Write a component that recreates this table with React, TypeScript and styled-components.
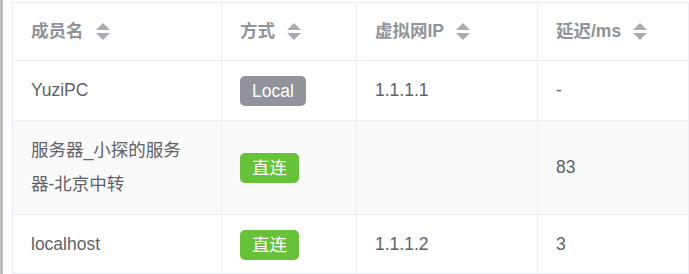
import React from "react";
import styled, { createGlobalStyle } from "styled-components";

const Global = createGlobalStyle`
  html, body { margin: 0; padding: 0; background: #ffffff; }
  body { font-family: "Liberation Sans", "Noto Sans CJK SC", sans-serif; }
`;

const Frame = styled.div`
  box-sizing: border-box;
  width: 689px;
  height: 274px;
  border-left: 3px solid #bdbdbd;
  padding: 2px 0 0 9px;
  overflow: hidden;
`;

const Table = styled.table`
  width: 676px;
  table-layout: fixed;
  border-collapse: collapse;
  border: 1px solid #ebeef5;
  font-size: 17.5px;
  color: #606266;
`;

const Row = styled.tr<{ $striped?: boolean }>`
  background: ${(p) => (p.$striped ? "#fafafa" : "#ffffff")};
`;

const HeadCell = styled.th`
  border: 1px solid #ebeef5;
  padding: 12px 18px;
  text-align: left;
  font-weight: 700;
  color: #909399;
  line-height: 33px;
  white-space: nowrap;
`;

const HeadInner = styled.div`
  display: flex;
  align-items: center;
`;

const Caret = styled.span`
  display: inline-flex;
  flex-direction: column;
  gap: 3px;
  margin-left: 12px;
`;

const Tri = styled.span<{ $dir: "up" | "down" }>`
  width: 0;
  height: 0;
  border-left: 7px solid transparent;
  border-right: 7px solid transparent;
  ${(p) =>
    p.$dir === "up"
      ? "border-bottom: 7px solid #a8abb2;"
      : "border-top: 7px solid #a8abb2;"}
`;

const Cell = styled.td`
  border: 1px solid #ebeef5;
  padding: 12px 26px 12px 18px;
  line-height: 34.5px;
  vertical-align: middle;
`;

const Tag = styled.span<{ $kind: "info" | "success" }>`
  display: inline-flex;
  align-items: center;
  height: 30px;
  padding: 0 12px;
  border-radius: 5px;
  color: #ffffff;
  font-size: 17.5px;
  line-height: 30px;
  vertical-align: middle;
  background: ${(p) => (p.$kind === "info" ? "#909399" : "#67c23a")};
`;

const SortIcon = () => (
  <Caret>
    <Tri $dir="up" />
    <Tri $dir="down" />
  </Caret>
);

const rows = [
  { name: "YuziPC", mode: "Local", kind: "info" as const, ip: "1.1.1.1", ms: "-" },
  { name: "服务器_小探的服务器-北京中转", mode: "直连", kind: "success" as const, ip: "", ms: "83" },
  { name: "localhost", mode: "直连", kind: "success" as const, ip: "1.1.1.2", ms: "3" },
];

const headers = ["成员名", "方式", "虚拟网IP", "延迟/ms"];

export default function App() {
  return (
    <>
      <Global />
      <Frame>
        <Table>
          <colgroup>
            <col style={{ width: 209 }} />
            <col style={{ width: 135 }} />
            <col style={{ width: 181 }} />
            <col style={{ width: 151 }} />
          </colgroup>
          <thead>
            <Row>
              {headers.map((h) => (
                <HeadCell key={h}>
                  <HeadInner>
                    {h}
                    <SortIcon />
                  </HeadInner>
                </HeadCell>
              ))}
            </Row>
          </thead>
          <tbody>
            {rows.map((r, i) => (
              <Row key={r.name} $striped={i % 2 === 1}>
                <Cell>{r.name}</Cell>
                <Cell>
                  <Tag $kind={r.kind}>{r.mode}</Tag>
                </Cell>
                <Cell>{r.ip}</Cell>
                <Cell>{r.ms}</Cell>
              </Row>
            ))}
          </tbody>
        </Table>
      </Frame>
    </>
  );
}
